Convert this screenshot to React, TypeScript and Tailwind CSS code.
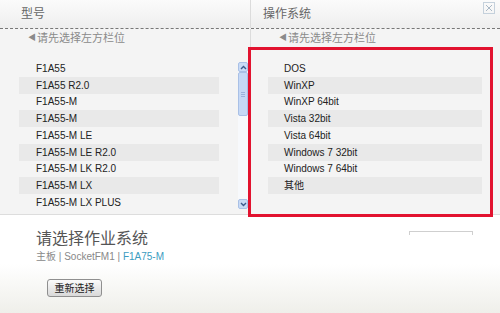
import React from 'react';

const models = [
  'F1A55',
  'F1A55 R2.0',
  'F1A55-M',
  'F1A55-M',
  'F1A55-M LE',
  'F1A55-M LE R2.0',
  'F1A55-M LK R2.0',
  'F1A55-M LX',
  'F1A55-M LX PLUS',
];

const systems = [
  'DOS',
  'WinXP',
  'WinXP 64bit',
  'Vista 32bit',
  'Vista 64bit',
  'Windows 7 32bit',
  'Windows 7 64bit',
  '其他',
];

function Hint() {
  return (
    <div className="flex items-center text-[11px] leading-[14px] text-[#8a8a8a]">
      <span className="text-[8px] mr-[1px]">◀</span>
      请先选择左方栏位
    </div>
  );
}

function Scrollbar() {
  return (
    <div className="w-[10px] h-[147px] mt-[2px] flex flex-col bg-[#f7f9fc]">
      <div className="h-[10px] bg-[#c9dbf6] border border-[#a9c0e6] rounded-[2px] flex items-center justify-center">
        <svg width="7" height="5" viewBox="0 0 7 5">
          <path d="M1 4 L3.5 1.5 L6 4" stroke="#3b5a8c" strokeWidth="1.4" fill="none" />
        </svg>
      </div>
      <div className="h-[44px] bg-[#c6d9f6] border border-[#a9c0e6] rounded-[2px] flex flex-col items-center justify-center gap-[1px]">
        <div className="w-[4px] h-[1px] bg-[#9bb3dc]" />
        <div className="w-[4px] h-[1px] bg-[#9bb3dc]" />
        <div className="w-[4px] h-[1px] bg-[#9bb3dc]" />
      </div>
      <div className="flex-1" />
      <div className="h-[10px] bg-[#c9dbf6] border border-[#a9c0e6] rounded-[2px] flex items-center justify-center">
        <svg width="7" height="5" viewBox="0 0 7 5">
          <path d="M1 1 L3.5 3.5 L6 1" stroke="#3b5a8c" strokeWidth="1.4" fill="none" />
        </svg>
      </div>
    </div>
  );
}

export default function App() {
  return (
    <div
      className="w-[500px] h-[313px] relative overflow-hidden bg-[#f4f4f4] text-[#333]"
      style={{ fontFamily: '"Liberation Sans", "Noto Sans CJK SC", sans-serif' }}
    >
      {/* Header */}
      <div className="h-[28px] flex bg-gradient-to-b from-[#fbfbfb] to-[#eeeeee]">
        <div className="w-[251px] border-r border-[#dcdcdc] pl-[21px] flex items-center text-[12px] text-[#666]">
          型号
        </div>
        <div className="flex-1 pl-[12px] flex items-center justify-between text-[12px] text-[#666]">
          操作系统
          <div className="mr-[5px] mb-[12px] w-[12px] h-[12px] border border-[#c5d1dc] flex items-center justify-center">
            <svg width="8" height="8" viewBox="0 0 8 8">
              <path d="M1 1 L7 7 M7 1 L1 7" stroke="#a9b8c6" strokeWidth="1" />
            </svg>
          </div>
        </div>
      </div>
      <div className="border-t border-dashed border-[#777]" />

      {/* Hints */}
      <div className="h-[31px] flex">
        <div className="w-[251px] border-r border-[#dcdcdc] pl-[28px] pt-[2px]">
          <Hint />
        </div>
        <div className="flex-1 pl-[28px] pt-[2px]">
          <Hint />
        </div>
      </div>

      {/* Lists */}
      <div className="h-[154px] flex">
        <div className="w-[251px] flex pl-[19px]">
          <div className="w-[200px]">
            {models.map((m, i) => (
              <div
                key={i}
                className={`h-[16.75px] pl-[17px] flex items-center text-[10px] text-[#222] ${
                  i % 2 === 1 ? 'bg-[#e9e9e9]' : ''
                }`}
              >
                {m}
              </div>
            ))}
          </div>
          <div className="ml-[19px]">
            <Scrollbar />
          </div>
        </div>
        <div className="flex-1 pl-[17px]">
          <div className="w-[214px]">
            {systems.map((s, i) => (
              <div
                key={i}
                className={`h-[16.75px] pl-[16px] flex items-center text-[10px] text-[#222] ${
                  i % 2 === 1 ? 'bg-[#e9e9e9]' : ''
                }`}
              >
                {s}
              </div>
            ))}
          </div>
        </div>
      </div>

      {/* Bottom panel */}
      <div className="h-[99px] border-t border-[#dddddd] bg-gradient-to-b from-white via-white to-[#efefea] flex">
        <div className="flex-1 pl-[36px] pt-[14px]">
          <div className="text-[16px] leading-[20px] text-[#555]">请选择作业系统</div>
          <div className="mt-[1px] text-[10px] leading-[14px] text-[#888]">
            主板 | SocketFM1 | <span className="text-[#3b9cbf]">F1A75-M</span>
          </div>
          <button className="mt-[15px] ml-[11px] w-[55px] h-[18px] rounded-[3px] border border-[#8f8f8f] bg-gradient-to-b from-[#fbfbfb] to-[#d9d9d9] text-[10px] text-[#222] flex items-center justify-center">
            重新选择
          </button>
        </div>
        <div className="w-[91px] pt-[16px]">
          <div className="w-[64px] h-[4px] border-t border-l border-r border-[#cfcfcf]" />
        </div>
      </div>

      {/* Highlight box */}
      <div className="absolute left-[248px] top-[47px] w-[245px] h-[170px] border-[3px] border-[#e2122f]" />
    </div>
  );
}
